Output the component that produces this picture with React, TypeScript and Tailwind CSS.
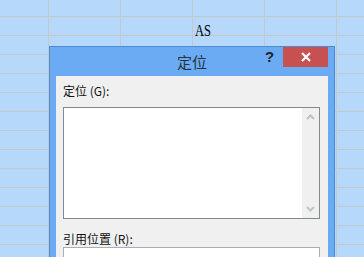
import React from 'react';

const cols = [49, 72, 72, 72, 72, 72];
const rows = Array.from({ length: 14 }, (_, i) => (i === 0 ? 17 : 19));

const Sheet: React.FC = () => (
  <div className="flex flex-col">
    {rows.map((h, r) => (
      <div key={r} className="flex shrink-0" style={{ height: h }}>
        {cols.map((w, c) => (
          <div
            key={c}
            className="shrink-0 border-r border-b border-[#c4c8cc] bg-[#b6d8fb] pl-[2px]"
            style={{ width: w }}
          >
            {r === 1 && c === 3 && (
              <span className="inline-block origin-left scale-x-[0.78] pt-[1px] text-[16px] leading-[17px] text-black [font-family:'Liberation_Serif',serif]">
                AS
              </span>
            )}
          </div>
        ))}
      </div>
    ))}
  </div>
);

const Chevron: React.FC<{ up?: boolean }> = ({ up }) => (
  <svg width="9" height="6" viewBox="0 0 9 6" className="block">
    <path
      d={up ? 'M1 5 L4.5 1.5 L8 5' : 'M1 1 L4.5 4.5 L8 1'}
      fill="none"
      stroke="#c2c2c2"
      strokeWidth="2"
    />
  </svg>
);

export default function App() {
  return (
    <div className="relative w-[364px] h-[257px] overflow-hidden bg-[#b6d8fb] [font-family:'Noto_Sans_CJK_SC',sans-serif]">
      <Sheet />

      {/* goto dialog */}
      <div className="absolute left-[49px] top-[46px] w-[286px] h-[230px] border border-[#4f8ad0] bg-[#6aabf3] px-[6px]">
        <div className="relative h-[29px] flex items-center justify-center">
          <span className="text-[15px] leading-[20px] text-[#27313d] mt-[1px]">定位</span>
          <span className="absolute left-[209px] top-[1px] text-[15px] font-bold leading-[18px] text-[#222] [font-family:'Liberation_Sans',sans-serif]">?</span>
          <div className="absolute right-0 top-0 w-[45px] h-[20px] bg-[#c75050] flex items-center justify-center">
            <svg width="10" height="10" viewBox="0 0 10 10">
              <path d="M1 1 L9 9 M9 1 L1 9" stroke="#fff" strokeWidth="2.2" />
            </svg>
          </div>
        </div>

        <div className="bg-[#f0f0f0] h-[200px] px-[7px] pt-[7px]">
          <p className="text-[12px] leading-[16px] text-[#111]">定位 (G):</p>
          <div className="mt-[8px] w-[257px] h-[112px] border border-[#828790] bg-white flex justify-end">
            <div className="w-[17px] h-full bg-[#f0f0f0] flex flex-col items-center justify-between py-[6px]">
              <Chevron up />
              <Chevron />
            </div>
          </div>
          <p className="mt-[12px] text-[12px] leading-[16px] text-[#111]">引用位置 (R):</p>
          <div className="w-[257px] h-[22px] border border-[#abadb3] bg-white" />
        </div>
      </div>
    </div>
  );
}
